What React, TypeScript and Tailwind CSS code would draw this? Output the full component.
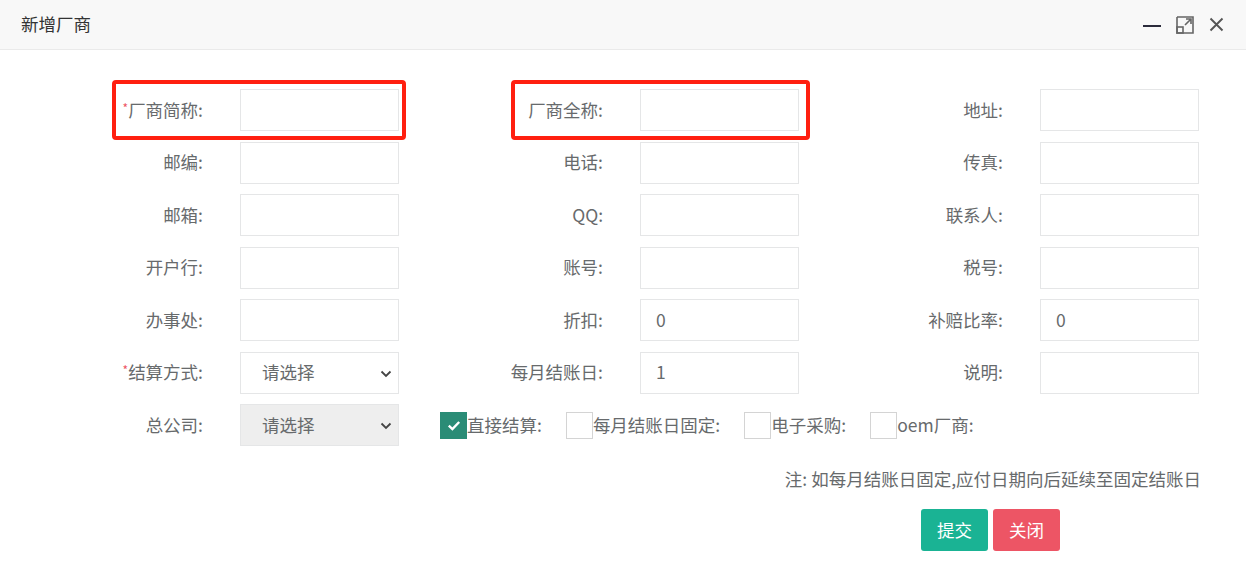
const font = { fontFamily: '"Noto Sans CJK SC", "Noto Sans", sans-serif' };

type Field = { label: string; required?: boolean; value?: string; select?: boolean; disabled?: boolean };

const rows: Field[][] = [
  [{ label: "厂商简称:", required: true }, { label: "厂商全称:" }, { label: "地址:" }],
  [{ label: "邮编:" }, { label: "电话:" }, { label: "传真:" }],
  [{ label: "邮箱:" }, { label: "QQ:" }, { label: "联系人:" }],
  [{ label: "开户行:" }, { label: "账号:" }, { label: "税号:" }],
  [{ label: "办事处:" }, { label: "折扣:", value: "0" }, { label: "补赔比率:", value: "0" }],
  [{ label: "结算方式:", required: true, select: true }, { label: "每月结账日:", value: "1" }, { label: "说明:" }],
];

function Chevron() {
  return (
    <svg width="12" height="8" viewBox="0 0 12 8" className="absolute right-[6px] top-[17px]">
      <path d="M1.5 1.5 L6 6 L10.5 1.5" fill="none" stroke="#444" strokeWidth="1.8" />
    </svg>
  );
}

function Control({ f }: { f: Field }) {
  if (f.select) {
    return (
      <div
        className={`relative w-[159px] h-[42px] border border-[#e5e6e7] flex items-center pl-[21px] text-[#676a6c] ${
          f.disabled ? "bg-[#eeeeee]" : "bg-white"
        }`}
      >
        请选择
        <Chevron />
      </div>
    );
  }
  return (
    <div className="w-[159px] h-[42px] border border-[#e5e6e7] bg-white flex items-center pl-[15px] text-[#676a6c]">
      {f.value}
    </div>
  );
}

function Cell({ f }: { f: Field }) {
  return (
    <div className="w-[400px] flex items-center">
      <div className="w-[203px] text-right">
        {f.required && <span className="text-[#ed5565] text-[12px] align-top relative top-[2px]">*</span>}
        {f.label}
      </div>
      <div className="ml-[37px]">
        <Control f={f} />
      </div>
    </div>
  );
}

function Check({ checked, label }: { checked?: boolean; label: string }) {
  return (
    <div className="flex items-center mr-[24px]">
      <div
        className={`w-[27px] h-[27px] flex items-center justify-center ${
          checked ? "bg-[#2a8c76]" : "border border-[#d4d4d4] bg-white"
        }`}
      >
        {checked && (
          <svg width="14" height="11" viewBox="0 0 14 11">
            <path d="M1.8 5.6 L5.4 9 L12.2 2" fill="none" stroke="white" strokeWidth="2.4" />
          </svg>
        )}
      </div>
      <span>{label}</span>
    </div>
  );
}

export default function App() {
  return (
    <div className="relative w-[1246px] h-[565px] bg-white text-[17.5px] text-[#676a6c] overflow-hidden" style={font}>
      <div className="h-[50px] bg-[#f8f8f8] border-b border-[#eaeaea] flex items-center pl-[21px] pr-[22px]">
        <span className="text-[#333]">新增厂商</span>
        <div className="ml-auto flex items-center gap-[15px]">
          <svg width="18" height="18" viewBox="0 0 18 18">
            <path d="M0 10 H18" stroke="#2b2b3b" strokeWidth="2" />
          </svg>
          <svg width="18" height="18" viewBox="0 0 18 18">
            <path d="M1 7 V17 H11 M1 1 H17 V17 H11 M1 1 V7" fill="none" stroke="#666" strokeWidth="1.6" />
            <rect x="1" y="11" width="6" height="6" fill="none" stroke="#666" strokeWidth="1.6" />
            <path d="M9 9 L15 3 M10 3 H15 V8" fill="none" stroke="#666" strokeWidth="1.6" />
          </svg>
          <svg width="15" height="15" viewBox="0 0 15 15">
            <path d="M1.5 1.5 L13.5 13.5 M13.5 1.5 L1.5 13.5" stroke="#555" strokeWidth="1.9" />
          </svg>
        </div>
      </div>

      <div className="pt-[39px] flex flex-col gap-y-[10.5px]">
        {rows.map((r, i) => (
          <div key={i} className="flex">
            {r.map((f) => (
              <Cell key={f.label} f={f} />
            ))}
          </div>
        ))}
        <div className="flex items-center">
          <Cell f={{ label: "总公司:", select: true, disabled: true }} />
          <div className="ml-[40px] flex items-center">
            <Check checked label="直接结算:" />
            <Check label="每月结账日固定:" />
            <Check label="电子采购:" />
            <Check label="oem厂商:" />
          </div>
        </div>
      </div>

      <div className="mt-[20px] pr-[45px] text-right">注: 如每月结账日固定,应付日期向后延续至固定结账日</div>

      <div className="mt-[17px] pl-[921px] flex gap-[5px]">
        <button className="w-[67px] h-[42px] rounded-[3px] bg-[#1ab394] text-white">提交</button>
        <button className="w-[67px] h-[42px] rounded-[3px] bg-[#ed5565] text-white">关闭</button>
      </div>

      <div className="absolute left-[112px] top-[80px] w-[294px] h-[60px] border-4 border-[#ff1f10] rounded-[4px] pointer-events-none" />
      <div className="absolute left-[511px] top-[80px] w-[299px] h-[60px] border-4 border-[#ff1f10] rounded-[4px] pointer-events-none" />
    </div>
  );
}
